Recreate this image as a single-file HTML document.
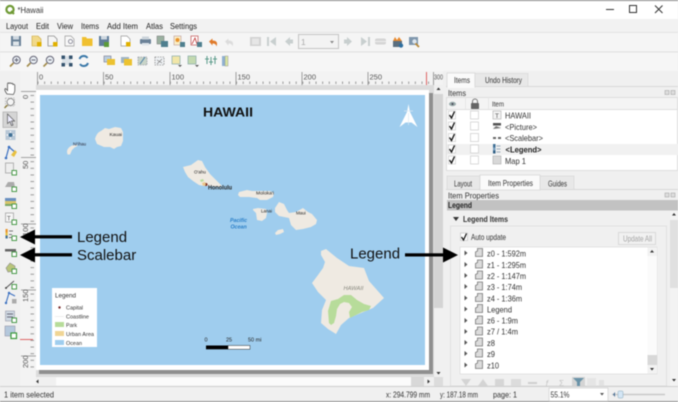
<!DOCTYPE html>
<html><head><meta charset="utf-8"><title>Hawaii</title>
<style>
html,body{margin:0;padding:0;width:678px;height:402px;overflow:hidden;background:#f0f0f0}
svg{display:block;filter:blur(.45px)}
text{font-family:"Liberation Sans",sans-serif;font-size:8.4px;fill:#333}
.m{font-size:8.6px;fill:#222}
.g{fill:#aaa}
.r{font-size:7.5px;fill:#555}
.big{font-size:15px;fill:#111}
.t{font-size:8.2px;fill:#333}
</style></head><body>
<svg width="678" height="402" viewBox="0 0 678 402" xmlns="http://www.w3.org/2000/svg">
<defs>
<pattern id="tk" width="6.62" height="14" patternUnits="userSpaceOnUse" x="37.5" y="71"><rect x="0" y="10.5" width="1" height="2.5" fill="#999"/></pattern>
<pattern id="tl" width="14" height="6.62" patternUnits="userSpaceOnUse" x="20" y="95"><rect x="10.5" y="0" width="4" height="1" fill="#999"/></pattern>
</defs>
<!-- title bar -->
<rect width="678" height="402" fill="#f0f0f0"/>
<rect width="678" height="19" fill="#fff"/>
<rect width="678" height="1" fill="#8a8a8a"/>
<circle cx="10" cy="9.5" r="3.6" fill="none" stroke="#6f9a35" stroke-width="2.2"/><path d="M11 11l3 3" stroke="#6f9a35" stroke-width="2"/>
<text x="17.500" y="13" textLength="26" lengthAdjust="spacingAndGlyphs" style="font-size:8.6px">*Hawaii</text>
<path d="M606 9.500h8" stroke="#333"/><rect x="629.500" y="5.500" width="7" height="7" fill="none" stroke="#333"/><path d="M655 5.500l7.500 7.500M662.500 5.500l-7.500 7.500" stroke="#333"/>
<!-- menu -->
<rect y="19" width="678" height="13" fill="#f2f2f2"/>
<text class="m" x="6" y="29" textLength="22" lengthAdjust="spacingAndGlyphs">Layout</text><text class="m" x="36" y="29" textLength="13" lengthAdjust="spacingAndGlyphs">Edit</text><text class="m" x="57" y="29" textLength="16" lengthAdjust="spacingAndGlyphs">View</text><text class="m" x="81" y="29" textLength="18" lengthAdjust="spacingAndGlyphs">Items</text><text class="m" x="107" y="29" textLength="31" lengthAdjust="spacingAndGlyphs">Add Item</text><text class="m" x="146" y="29" textLength="17" lengthAdjust="spacingAndGlyphs">Atlas</text><text class="m" x="170" y="29" textLength="27" lengthAdjust="spacingAndGlyphs">Settings</text>
<!-- toolbars -->
<rect y="32" width="678" height="20" fill="#f5f5f5"/><rect y="32" width="678" height=".7" fill="#dcdcdc"/>
<rect y="52" width="678" height="19" fill="#f6f6f6"/><rect y="51.500" width="678" height=".8" fill="#d8d8d8"/>
<!-- toolbar1 icons -->
<g>
<rect x="11" y="36" width="10" height="10" fill="#6b8298"/><rect x="13" y="36" width="6" height="3.500" fill="#cfd8e0"/><rect x="13" y="41.500" width="6" height="4" fill="#dfe5ea"/>
<path d="M32 36h6l3 3v7h-9z" fill="#f1d98a" stroke="#c9a63a" stroke-width=".6"/><rect x="37" y="42" width="4.500" height="4.500" fill="#e0b000"/>
<path d="M48 36h6l3 3v7h-9z" fill="#f5f5f5" stroke="#8d8d8d" stroke-width=".8"/><rect x="53" y="42" width="4.500" height="4.500" fill="#e0b000"/>
<path d="M65 36h6l3 3v7h-9z" fill="#f8f8f8" stroke="#9a9a9a" stroke-width=".7"/><circle cx="70.500" cy="41.500" r="2" fill="none" stroke="#778" stroke-width=".8"/>
<path d="M82 37h4l1 1.500h5.500V46H82z" fill="#f0c030"/>
<rect x="99" y="36" width="10" height="10" fill="#607d9a"/><rect x="101" y="36" width="6" height="3.500" fill="#cfd8e0"/><rect x="104" y="42" width="5" height="5" fill="#5b9a3a"/>
<path d="M121 36h6l3 3v7h-9z" fill="#fff" stroke="#999" stroke-width=".7"/><rect x="126" y="42" width="4.500" height="4.500" fill="#e0b000"/>
<rect x="140" y="39" width="11" height="5" rx="1" fill="#6b8298"/><rect x="142" y="36.500" width="7" height="3" fill="#cbd3da"/><rect x="142" y="43" width="7" height="2.500" fill="#dfe5ea"/>
<rect x="157" y="36" width="7" height="8" fill="#9ab0a0" stroke="#777" stroke-width=".5"/><rect x="161" y="41" width="7" height="6" fill="#4f7f8f"/>
<rect x="174" y="36" width="7" height="9" fill="#fbeec5" stroke="#b99" stroke-width=".6"/><circle cx="177.500" cy="40" r="2" fill="#e8932c"/><rect x="180" y="42" width="5" height="5" fill="#4f7f8f"/>
<rect x="191" y="36" width="7" height="9" fill="#fff" stroke="#c05050" stroke-width=".7"/><path d="M192 44l3-6 2 6" stroke="#c03030" fill="none" stroke-width=".8"/><rect x="197" y="42" width="5" height="5" fill="#4f7f8f"/>
<path d="M209 41.500l3.500-3v2c4 0 5.500 2 4 6-.5-2.500-2-3-4-3v2z" fill="#e07a2a"/>
<path d="M225 41.500l3.500-3v2c4 0 5.500 2 4 6-.5-2.500-2-3-4-3v2z" fill="#dcdcdc"/>
<rect x="250" y="37" width="11" height="9" fill="#d2d2d2"/><rect x="252" y="38.500" width="7" height="6" fill="#e6e6e6"/>
<path d="M267 37v9h2v-9zM276 37l-6 4.500 6 4.500z" fill="#c8cfcf"/>
<path d="M285 41.500l5-4.500v2.500h3v4h-3v2.500z" fill="#c8cfcf"/>
<rect x="298.500" y="34.500" width="40" height="14" fill="#f3f3f3" stroke="#c4c4c4"/><text x="301" y="45" class="g">1</text><path d="M330 41h4l-2 2.500z" fill="#888"/>
<path d="M352 41.500l-5-4.500v2.500h-3v4h3v2.500z" fill="#c8cfcf"/>
<path d="M370 37v9h-2v-9zM361 37l6 4.500-6 4.500z" fill="#c8cfcf"/>
<rect x="375" y="38.500" width="11" height="6" rx="2" fill="#d4d4d4"/><path d="M375 41.500h11" stroke="#eee"/>
<rect x="393" y="41" width="9" height="6" fill="#5b6f7f"/><path d="M393 41l2-4 2 3 2-3 3 4z" fill="#e88a30"/><circle cx="401" cy="45.500" r="2.200" fill="#2f6f9f"/>
<rect x="409" y="37" width="9" height="8" fill="#7f97ad"/><path d="M415 43l4 4" stroke="#b88a3a" stroke-width="1.800"/><circle cx="414.500" cy="41.500" r="2.200" fill="#dde6ee"/>
</g>
<!-- toolbar2 icons -->
<g fill="none">
<g stroke="#667" stroke-width="1"><circle cx="16.500" cy="60" r="3.700" fill="#e8eef3"/><path d="M13.500 63l-3.500 3.500" stroke="#a08a4a" stroke-width="1.600"/><path d="M14.500 60h4M16.500 58v4"/>
<circle cx="33.500" cy="60" r="3.700" fill="#e8eef3"/><path d="M30.500 63l-3.500 3.500" stroke="#a08a4a" stroke-width="1.600"/><path d="M31.500 60h4"/>
<circle cx="50" cy="60" r="3.700" fill="#e8eef3"/><path d="M47 63l-3.500 3.500" stroke="#a08a4a" stroke-width="1.600"/><path d="M48.500 60h3"/></g>
<rect x="62" y="56" width="9" height="9" fill="#dbe2e8"/><g fill="#35536e"><rect x="61.500" y="55.500" width="3.500" height="3.500"/><rect x="69" y="55.500" width="3.500" height="3.500"/><rect x="61.500" y="63" width="3.500" height="3.500"/><rect x="69" y="63" width="3.500" height="3.500"/></g>
<path d="M79.500 59a4.500 4.500 0 0 1 8-1M88 63a4.500 4.500 0 0 1-8 1" stroke="#3a78a8" stroke-width="2"/>
</g>
<rect x="104" y="56" width="7" height="6" fill="#b8cde0" stroke="#778" stroke-width=".6"/><rect x="107" y="59" width="8" height="6" fill="#ecc230"/>
<rect x="121" y="57" width="8" height="6" fill="#9fb4c4"/><rect x="124" y="59" width="8" height="6.500" fill="#ecc230"/>
<rect x="138" y="57" width="9" height="8" fill="#c8d4c8" stroke="#889" stroke-width=".6" stroke-dasharray="1.500 1"/><path d="M140 64l5-7" stroke="#4a7fa8"/>
<rect x="155" y="57" width="9" height="8" fill="#eef1f4" stroke="#666" stroke-width=".6" stroke-dasharray="1.500 1"/><path d="M157 60l5 3M162 59l-5 5" stroke="#777" stroke-width=".6"/>
<rect x="172" y="56" width="8" height="8" fill="#f1e6a8" stroke="#8aa" stroke-width=".7"/><path d="M178 65h4l-2 2z" fill="#555"/>
<rect x="188" y="56" width="8" height="8" fill="#c3d9b0" stroke="#8aa" stroke-width=".7"/><path d="M195 65h4l-2 2z" fill="#555"/>
<path d="M207 56v8M211 57v8M215 56v8" stroke="#5a9a8a"/><path d="M205 59h4M209 62h4M213 59h4" stroke="#5a9a8a"/>
<rect x="222" y="56" width="3" height="10" fill="#8fb0d0"/><rect x="225" y="56" width="3" height="10" fill="#d8e4a0" stroke="#889" stroke-width=".4"/>
<!-- workspace -->
<rect x="20" y="71" width="423" height="316" fill="#dcdcdc"/>
<!-- top ruler -->
<rect x="20" y="71" width="423" height="14" fill="#f3f3f3"/>
<rect x="36" y="71" width="395" height="14" fill="url(#tk)"/>
<g stroke="#888" stroke-width=".8"><path d="M37.500 72v13M103.500 72v13M170 72v13M236 72v13M302 72v13M368 72v13M433.500 72v13"/></g>
<path d="M426.500 72v13" stroke="#d55" stroke-width=".9"/>
<g class="r"><text class="r" x="39" y="79.500">0</text><text class="r" x="105" y="79.500">50</text><text class="r" x="171.500" y="79.500">100</text><text class="r" x="237.500" y="79.500">150</text><text class="r" x="303.500" y="79.500">200</text><text class="r" x="369.500" y="79.500">250</text><text class="r" x="434" y="79.500" textLength="9" lengthAdjust="spacingAndGlyphs">300</text></g>
<rect x="443" y="71" width="3" height="316" fill="#f0f0f0"/>
<!-- left ruler -->
<rect x="20" y="85" width="16" height="302" fill="#f3f3f3"/>
<rect x="20" y="91" width="16" height="280" fill="url(#tl)"/>
<g stroke="#888" stroke-width=".8"><path d="M21 91.500h15M21 157.500h15M21 224h15M21 290h15M21 356h15"/></g>
<path d="M20 339.500h13" stroke="#d55" stroke-width=".9"/>
<text class="r" transform="translate(28,99) rotate(-90)">0</text>
<text class="r" transform="translate(28,169) rotate(-90)">50</text>
<text class="r" transform="translate(28,236) rotate(-90)">100</text>
<text class="r" transform="translate(28,302) rotate(-90)">150</text>
<text class="r" transform="translate(28,368) rotate(-90)">200</text>
<!-- page -->
<rect x="39" y="93" width="394" height="281" fill="#8f8f8f"/>
<rect x="36" y="90" width="393" height="280" fill="#fff"/>
<rect x="40" y="95" width="385" height="270" fill="#9fcdee"/>
<!-- islands -->
<g fill="#efeae2">
<path d="M95 139c1-4 3-7 6-8l4-3 4 1 6-2 6 1 2 4 0 9-2 5-4 1-3 2-4-2-6 0-7-3z"/>
<path d="M67 152c0-3 2-5 5-6.500l5-1 .5 1.500-3 1.500-2.500 2.500-2 4.500-2.500 0z"/>
<path d="M183 167l8-2 7-5 4 1 3 6 5 7 7 7 5 5-3 1-8-1-7 0-5-1-6-4-5-4-3-5z"/>
<path d="M239 192l8-2 5 1 10 0 8 0 4 2-1 4-6 3-7 0-3-2-8-1-9 0-2-2z"/>
<path d="M253 209l5-1 8 1 1 4-1 5-4 3-5-1-1-7-3-3z"/>
<path d="M275 208L279 202L284 204L287 210L289 213L296 212L303 208L308 212L312 214L317 220L316 224L311 227L303 229L296 230L291 225L289 218L284 217L279 216L275 212z"/>
<path d="M275 233l3-3 5-1 1 3-4 2-4 1z"/>
<path d="M321 251L326 249L337 258L349 266L364 268L369 281L384 298L373 308L349 318L341 325L336 334L328 329L321 323L322 310L326 300L318 292L312 283L318 275L323 268L325 262L321 255z"/>
</g>
<path d="M329 323L328 311L331 301L338 299L344 295L351 295L357 300L364 304L371 306L369 310L362 312L356 315L350 318L349 312L352 307L349 303L344 302L340 304L337 309L336 316L334 323L331 325z" fill="#b7dc9a"/>
<circle cx="206" cy="184.500" r="1.500" fill="#7a2a1a"/><path d="M202 183l3-1 1 3-3 1z" fill="#ecc88a"/>
<path d="M200 180l3-1 1 2-3 1z" fill="#b7dc9a"/>
<!-- map labels -->
<text x="203" y="116.500" textLength="50" lengthAdjust="spacingAndGlyphs" style="font-size:12.500px;font-weight:bold;fill:#111">HAWAII</text>
<text x="109.500" y="136" textLength="12.500" lengthAdjust="spacingAndGlyphs" style="font-size:4.500px;fill:#222">Kauai</text>
<text x="73" y="145.500" textLength="13" lengthAdjust="spacingAndGlyphs" style="font-size:4.500px;fill:#223">Ni'ihau</text>
<text x="194" y="173.500" style="font-size:4.500px;fill:#222">O'ahu</text>
<text x="208" y="189.500" textLength="24" lengthAdjust="spacingAndGlyphs" style="font-size:6px;font-weight:bold;fill:#222">Honolulu</text>
<text x="256" y="194.500" textLength="18" lengthAdjust="spacingAndGlyphs" style="font-size:4.500px;fill:#222">Moloka'i</text>
<text x="261" y="212.500" style="font-size:4.500px;fill:#222">Lanai</text>
<text x="296" y="214.500" style="font-size:4.500px;fill:#222">Maui</text>
<text x="230" y="222" style="font-size:5.300px;font-style:italic;font-weight:bold;fill:#2a7fc8">Pacific</text>
<text x="230.500" y="228.500" style="font-size:5.300px;font-style:italic;font-weight:bold;fill:#2a7fc8">Ocean</text>
<text x="343.500" y="290" textLength="20" lengthAdjust="spacingAndGlyphs" style="font-size:5px;font-style:italic;fill:#8a8a80">HAWAII</text>
<!-- north arrow -->
<path d="M408.500 104l1.500 8 7.500 15-6-4.500-3 0-3 0-6 4.500 7.500-15z" fill="#fff"/>
<path d="M408.500 113v12M404 111l9 0" stroke="#dbe9f4" stroke-width=".7"/>
<!-- legend -->
<rect x="52" y="288" width="45" height="59" fill="#fff"/>
<text x="55" y="297.500" textLength="21" lengthAdjust="spacingAndGlyphs" style="font-size:6.500px;fill:#333">Legend</text>
<circle cx="59.500" cy="307.500" r="1.200" fill="#7a2a2a"/>
<text x="66" y="309.500" textLength="17" lengthAdjust="spacingAndGlyphs" style="font-size:5.500px;fill:#333">Capital</text>
<path d="M55 316.500h9" stroke="#eee"/>
<text x="66" y="318.500" textLength="23" lengthAdjust="spacingAndGlyphs" style="font-size:5.500px;fill:#333">Coastline</text>
<rect x="55" y="322" width="9" height="5" fill="#b7dc9a"/><text x="66" y="327" textLength="11" lengthAdjust="spacingAndGlyphs" style="font-size:5.500px;fill:#333">Park</text>
<rect x="55" y="331" width="9" height="5" fill="#f0d595"/><text x="66" y="336" textLength="28" lengthAdjust="spacingAndGlyphs" style="font-size:5.500px;fill:#333">Urban Area</text>
<rect x="55" y="340" width="9" height="5" fill="#9fcdee"/><text x="66" y="345" textLength="16" lengthAdjust="spacingAndGlyphs" style="font-size:5.500px;fill:#333">Ocean</text>
<!-- scale -->
<text x="204.500" y="341.500" style="font-size:5.500px;fill:#222">0</text><text x="226" y="341.500" style="font-size:5.500px;fill:#222">25</text><text x="248" y="341.500" style="font-size:5.500px;fill:#222">50 mi</text>
<rect x="206" y="345.500" width="22" height="3.800" fill="#000"/><rect x="228" y="345.500" width="22" height="3.800" fill="#fff" stroke="#000" stroke-width=".4"/>
<!-- canvas scrollbars -->
<rect x="434" y="85" width="9" height="292" fill="#f0f0f0"/>
<rect x="434" y="94" width="9" height="214" fill="#d4d4d4"/>
<path d="M436.500 90h4l-2-2.500z" fill="#333"/><path d="M436.500 372h4l-2 2.500z" fill="#333"/>
<rect x="36" y="377" width="398" height="10" fill="#f0f0f0"/>
<rect x="56" y="377.500" width="355" height="8" fill="#fbfbfb"/><rect x="411" y="377" width="13" height="9" fill="#d8d8d8"/>
<path d="M36 381.500l2.500-2v4z" fill="#333"/><path d="M430 381.500l-2.500-2v4z" fill="#333"/>
<!-- left toolbar -->
<rect width="20" height="316" y="71" fill="#f0f0f0"/>
<path d="M7 94c-2-3-3-5-1.500-5.500l2 2V84c0-1.500 1.500-1.500 1.500 0 0-1.500 2-1.500 2 0 0-1 2-1 2 0.500 1-.5 1.800 0 1.800 1l0 5c0 2-1 3-1.500 4z" fill="#fff" stroke="#555" stroke-width=".8"/>
<rect x="5.500" y="98" width="9" height="8" fill="none" stroke="#999" stroke-width=".6" stroke-dasharray="1.500 1"/><circle cx="10.500" cy="102" r="3.500" fill="#f4f4f4" stroke="#777" stroke-width=".8"/><path d="M7.500 105l-3 3" stroke="#8a7a3a" stroke-width="1.300"/>
<rect x="3" y="112" width="14" height="15.500" fill="#d5d5d5" stroke="#aaa" stroke-width=".7"/><path d="M7.500 114l7 7-3 0 1.500 4-1.500.5-1.500-4-2.500 2z" fill="#eef" stroke="#555" stroke-width=".7"/>
<rect x="5.500" y="130" width="10" height="10" fill="#b8c7d6"/><path d="M10.500 131v8M6.500 135h8" stroke="#fff"/><circle cx="10.500" cy="135" r="2" fill="#3f6f95"/>
<path d="M6 158l3-11 7 6" fill="none" stroke="#3a6fc0" stroke-width="1.200"/><path d="M11 155l4-5 2 2-3 5z" fill="#e8c040"/><circle cx="6" cy="158" r="1.300" fill="#3a6fc0"/><circle cx="9" cy="147" r="1.300" fill="#3a6fc0"/>
<g><rect x="5.500" y="163" width="8" height="10" fill="#eee" stroke="#999" stroke-width=".7"/><rect x="12" y="170.500" width="4.500" height="4.500" fill="#fff" stroke="#4a9a4a" stroke-width="1"/>
<path d="M5 187l3-5 6 0 1 5z" fill="#aaa"/><rect x="12" y="187" width="4.500" height="4.500" fill="#fff" stroke="#4a9a4a" stroke-width="1"/>
<rect x="5" y="198" width="11" height="3" fill="#6a90c0"/><rect x="5" y="201" width="11" height="3" fill="#d8c46a"/><rect x="5" y="204" width="11" height="2" fill="#7aa868"/><rect x="12" y="204" width="4.500" height="4.500" fill="#fff" stroke="#4a9a4a" stroke-width="1"/>
<rect x="5.500" y="213" width="8" height="9" fill="#f6f6f6" stroke="#999" stroke-width=".7"/><text x="7" y="220.500" style="font-size:6px;fill:#555">T</text><rect x="12" y="220" width="4.500" height="4.500" fill="#fff" stroke="#4a9a4a" stroke-width="1"/>
<rect x="5.500" y="229" width="2.200" height="3.500" fill="#e8932c"/><rect x="5.500" y="232.500" width="2.200" height="3" fill="#e8c040"/><rect x="5.500" y="235.500" width="2.200" height="3" fill="#3f6f95"/><path d="M9 231h4M9 234.500h3M9 237.500h3" stroke="#777"/><rect x="12" y="236" width="4.500" height="4.500" fill="#fff" stroke="#4a9a4a" stroke-width="1"/>
<rect x="5" y="249" width="11" height="2.500" fill="#666"/><rect x="12" y="252" width="4.500" height="4.500" fill="#fff" stroke="#4a9a4a" stroke-width="1"/>
<path d="M6 268l4-5 5 3 0 5-7 1z" fill="#b8c47a" stroke="#888" stroke-width=".6"/><rect x="12" y="269" width="4.500" height="4.500" fill="#fff" stroke="#4a9a4a" stroke-width="1"/>
<path d="M6 288l8-7" stroke="#555"/><circle cx="6" cy="288" r="1" fill="#444"/><rect x="12" y="284.500" width="4.500" height="4.500" fill="#fff" stroke="#4a9a4a" stroke-width="1"/>
<path d="M6 303l3-10 6 3" fill="none" stroke="#3a6fc0" stroke-width="1.100"/><rect x="12" y="299" width="4.500" height="4.500" fill="#aaa"/><circle cx="9" cy="293" r="1.200" fill="#3a6fc0"/><circle cx="6" cy="303" r="1.200" fill="#3a6fc0"/>
<rect x="5.500" y="311" width="9" height="10" fill="#cfd9e2" stroke="#889" stroke-width=".5"/><path d="M7 314h6M7 317h6" stroke="#667"/><rect x="12" y="318" width="4.500" height="4.500" fill="#fff" stroke="#4a9a4a" stroke-width="1"/>
<rect x="5" y="326" width="10" height="10" fill="#b4c8dc" stroke="#889" stroke-width=".5"/><rect x="11" y="333" width="5.500" height="5.500" fill="#fff" stroke="#3a9a3a" stroke-width="1.200"/></g>
<!-- annotations -->
<rect x="33" y="235.200" width="39" height="3.200" fill="#000"/><path d="M20 237l15-7.500v15z" fill="#000"/>
<rect x="33" y="253.200" width="39" height="3.200" fill="#000"/><path d="M20 255l15-7.500v15z" fill="#000"/>
<text class="big" x="77" y="242">Legend</text>
<text class="big" x="77" y="260">Scalebar</text>
<!-- right panel -->
<rect x="446" y="71" width="232" height="316" fill="#f0f0f0"/>
<path d="M446 86.500h232" stroke="#d8d8d8"/>
<rect x="447" y="73" width="28" height="14" fill="#fafafa" stroke="#d4d4d4" stroke-width=".7"/>
<rect x="475" y="73.500" width="53" height="13" fill="#e8e8e8" stroke="#d8d8d8" stroke-width=".7"/>
<rect x="447.500" y="85" width="27" height="3" fill="#fafafa"/>
<text class="t" x="454" y="83" textLength="16" lengthAdjust="spacingAndGlyphs">Items</text><text class="t" x="485" y="83" textLength="37" lengthAdjust="spacingAndGlyphs">Undo History</text>
<text x="448" y="96" textLength="18" lengthAdjust="spacingAndGlyphs" style="font-size:8.600px;fill:#333">Items</text>
<g fill="#ddd" stroke="#999" stroke-width=".5"><rect x="665" y="90.500" width="4" height="4"/><rect x="671" y="90.500" width="4" height="4"/></g>
<rect x="447" y="97" width="231" height="13" fill="#f4f4f4"/>
<rect x="447" y="109.500" width="231" height="61" fill="#fff"/>
<rect x="446.500" y="97.500" width="231" height="73" fill="none" stroke="#d9d9d9" stroke-width=".8"/>
<path d="M447 109.500h231" stroke="#dedede"/>
<path d="M465.500 97v13M488.500 97v13" stroke="#e2e2e2" stroke-width=".7"/>
<ellipse cx="452.500" cy="104" rx="3.500" ry="2.200" fill="#9aa"/><circle cx="452.500" cy="104" r="1" fill="#445"/>
<rect x="471" y="103" width="8" height="6" rx=".8" fill="#666"/><path d="M472.500 103v-1.500a2.500 2.500 0 0 1 5 0V103" fill="none" stroke="#777"/>
<text x="492" y="106.500" textLength="12" lengthAdjust="spacingAndGlyphs" style="font-size:7.500px;fill:#333">Item</text>
<rect x="447" y="144" width="231" height="11" fill="#f1f1f1"/>
<g fill="#fff" stroke="#ccc" stroke-width=".7">
<rect x="448.500" y="111" width="7" height="8"/><rect x="448.500" y="122" width="7" height="8"/><rect x="448.500" y="133.500" width="7" height="8"/><rect x="448.500" y="145" width="7" height="8"/><rect x="448.500" y="156" width="7" height="8"/>
<rect x="470.500" y="111" width="8" height="8"/><rect x="470.500" y="122" width="8" height="8"/><rect x="470.500" y="133.500" width="8" height="8"/><rect x="470.500" y="145" width="8" height="8"/><rect x="470.500" y="156" width="8" height="8"/>
</g>
<g fill="none" stroke="#111" stroke-width="1.300"><path d="M449.500 115l2 3 3-6.500M449.500 126l2 3 3-6.500M449.500 137.500l2 3 3-6.500M449.500 149l2 3 3-6.500M449.500 160l2 3 3-6.500"/></g>
<rect x="493" y="111" width="8" height="8" fill="#f4f4f4" stroke="#aaa" stroke-width=".6"/><text x="495" y="118" style="font-size:6.500px;fill:#555">T</text>
<rect x="493" y="123" width="8" height="6" fill="#f4f4f4"/><rect x="493" y="123" width="8" height="2.500" fill="#555"/><path d="M493 129l3-3 5 2z" fill="#777"/>
<path d="M493 138h3M498 138h3" stroke="#666" stroke-width="2"/>
<rect x="493" y="144" width="2.500" height="3.500" fill="#3f6f95"/><rect x="493" y="147.500" width="2.500" height="3" fill="#7aa0c0"/><rect x="493" y="150.500" width="2.500" height="3" fill="#2f5f85"/><path d="M496.500 146h4M496.500 149h4M496.500 152h4" stroke="#9ab"/>
<rect x="493" y="156" width="8" height="8" fill="#d8d8d8" stroke="#aaa" stroke-width=".6"/>
<text x="505" y="118.500" textLength="26" lengthAdjust="spacingAndGlyphs" style="font-size:8.400px;fill:#333">HAWAII</text>
<text x="505" y="130" textLength="32" lengthAdjust="spacingAndGlyphs" style="font-size:8.400px;fill:#333">&lt;Picture&gt;</text>
<text x="505" y="141" textLength="38" lengthAdjust="spacingAndGlyphs" style="font-size:8.400px;fill:#333">&lt;Scalebar&gt;</text>
<text x="505.500" y="152.500" textLength="36" lengthAdjust="spacingAndGlyphs" style="font-size:8.400px;font-weight:bold;fill:#222">&lt;Legend&gt;</text>
<text x="505" y="164" textLength="21" lengthAdjust="spacingAndGlyphs" style="font-size:8.400px;fill:#333">Map 1</text>
<!-- lower tabs -->
<path d="M446 189.500h232" stroke="#d8d8d8"/>
<rect x="447" y="176" width="33" height="13.500" fill="#e8e8e8" stroke="#d8d8d8" stroke-width=".7"/>
<rect x="540" y="176" width="34" height="13.500" fill="#e8e8e8" stroke="#d8d8d8" stroke-width=".7"/>
<rect x="480" y="175" width="60" height="15" fill="#fafafa" stroke="#d4d4d4" stroke-width=".7"/>
<text class="t" x="454" y="186.500" textLength="18" lengthAdjust="spacingAndGlyphs">Layout</text><text class="t" x="488" y="186" textLength="45" lengthAdjust="spacingAndGlyphs">Item Properties</text><text class="t" x="548" y="186.500" textLength="19" lengthAdjust="spacingAndGlyphs">Guides</text>
<text x="448" y="198.500" textLength="51" lengthAdjust="spacingAndGlyphs" style="font-size:8.600px;fill:#333">Item Properties</text>
<g fill="#ddd" stroke="#999" stroke-width=".5"><rect x="665" y="193" width="4" height="4"/><rect x="671" y="193" width="4" height="4"/></g>
<rect x="447" y="200" width="231" height="10.500" fill="#c2c2c2"/>
<text x="448" y="208" textLength="24" lengthAdjust="spacingAndGlyphs" style="font-size:7.800px;font-weight:bold;fill:#222">Legend</text>
<!-- props -->
<rect x="447" y="211" width="223" height="176" fill="#f0f0f0"/>
<path d="M453 217h6l-3 4z" fill="#333"/>
<text x="463" y="222" textLength="45" lengthAdjust="spacingAndGlyphs" style="font-size:8px;font-weight:bold;fill:#333">Legend Items</text>
<rect x="450.500" y="226" width="216" height="160" fill="none" stroke="#dcdcdc" stroke-width=".8"/>
<rect x="670" y="211" width="8" height="176" fill="#f3f3f3"/>
<rect x="670" y="220" width="8" height="68" fill="#e0e0e0"/>
<path d="M672 215.500h4l-2-2.500zM672 379h4l-2 2.500z" fill="#333"/>
<rect x="460.500" y="233" width="7" height="7.500" fill="#fff" stroke="#bbb" stroke-width=".6"/>
<path d="M461.500 237l2 3 3-6.500" fill="none" stroke="#111" stroke-width="1.200"/>
<text class="t" x="471" y="240" textLength="35" lengthAdjust="spacingAndGlyphs">Auto update</text>
<rect x="618.500" y="232.500" width="37" height="12" fill="#f1f1f1" stroke="#d4d4d4" stroke-width=".8"/>
<text x="623" y="241.500" textLength="29" lengthAdjust="spacingAndGlyphs" style="font-size:7.800px;fill:#a5a5a5">Update All</text>
<rect x="460" y="247" width="197" height="127" fill="#fff" stroke="#dadada" stroke-width=".7"/>
<rect x="647.500" y="247.500" width="9.500" height="126" fill="#f2f2f2"/>
<rect x="647.500" y="256" width="9.500" height="100" fill="#fbfbfb"/><rect x="647.500" y="355" width="9.500" height="10" fill="#d8d8d8"/>
<path d="M650 252.500h4l-2-2.500zM650 368h4l-2 2.500z" fill="#333"/>
<g fill="#555">
<path d="M464.500 250.500l3 2.500-3 2.500zM464.500 262l3 2.500-3 2.500zM464.500 273l3 2.500-3 2.500zM464.500 284l3 2.500-3 2.500zM464.500 295.500l3 2.500-3 2.500zM464.500 306.500l3 2.500-3 2.500zM464.500 318l3 2.500-3 2.500zM464.500 329l3 2.500-3 2.500zM464.500 340l3 2.500-3 2.500zM464.500 351l3 2.500-3 2.500zM464.500 362.500l3 2.500-3 2.500z"/>
</g>
<g fill="#dcdcdc" stroke="#777" stroke-width=".8">
<path d="M475.500 252l2-1v-2.500h5v8h-7zM475.500 263.500l2-1v-2.500h5v8h-7zM475.500 274.500l2-1v-2.500h5v8h-7zM475.500 285.500l2-1v-2.500h5v8h-7zM475.500 297l2-1v-2.500h5v8h-7zM475.500 308l2-1v-2.500h5v8h-7zM475.500 319.500l2-1v-2.500h5v8h-7zM475.500 330.500l2-1v-2.500h5v8h-7zM475.500 341.500l2-1v-2.500h5v8h-7zM475.500 352.500l2-1v-2.500h5v8h-7zM475.500 364l2-1v-2.500h5v8h-7z"/>
</g>
<text class="t" x="487" y="256.500" textLength="39" lengthAdjust="spacingAndGlyphs">z0 - 1:592m</text>
<text class="t" x="487" y="268" textLength="39" lengthAdjust="spacingAndGlyphs">z1 - 1:295m</text>
<text class="t" x="487" y="279" textLength="39" lengthAdjust="spacingAndGlyphs">z2 - 1:147m</text>
<text class="t" x="487" y="290" textLength="35" lengthAdjust="spacingAndGlyphs">z3 - 1:74m</text>
<text class="t" x="487" y="301.500" textLength="35" lengthAdjust="spacingAndGlyphs">z4 - 1:36m</text>
<text class="t" x="487" y="312.500" textLength="25" lengthAdjust="spacingAndGlyphs">Legend</text>
<text class="t" x="487" y="323.500" textLength="31" lengthAdjust="spacingAndGlyphs">z6 - 1:9m</text>
<text class="t" x="487" y="334.500" textLength="31" lengthAdjust="spacingAndGlyphs">z7 / 1:4m</text>
<text class="t" x="487" y="346" textLength="8" lengthAdjust="spacingAndGlyphs">z8</text>
<text class="t" x="487" y="357" textLength="8" lengthAdjust="spacingAndGlyphs">z9</text>
<text class="t" x="487" y="368.500" textLength="12" lengthAdjust="spacingAndGlyphs">z10</text>
<!-- legend buttons -->
<path d="M461 379h10l-5 7zM478 386h10l-5-7z" fill="#d4d4d4"/>
<rect x="495" y="379" width="9" height="8" fill="#d6d6d6"/><rect x="511" y="379" width="10" height="8" fill="#dcdcdc"/><rect x="528" y="382" width="9" height="2" fill="#cfcfcf"/>
<text x="545" y="386" style="font-size:8px;fill:#c4c4c4">ƒ</text><text x="559" y="386" style="font-size:8px;fill:#c4c4c4">Σ</text>
<rect x="572" y="377" width="13" height="10" fill="#d4d4d4"/><path d="M573 378h11l-4 4v4l-3 0v-4z" fill="#6a93a8"/>
<rect x="587" y="378" width="9" height="9" fill="#e5e5e5"/><rect x="599" y="380" width="5" height="7" fill="#e2e2e2"/>
<!-- status bar -->
<rect y="387" width="678" height="15" fill="#f0f0f0"/>
<path d="M0 386.500h678" stroke="#cfcfcf"/><rect y="401" width="678" height="1" fill="#8f8f8f"/>
<text x="4" y="397.500" textLength="50" lengthAdjust="spacingAndGlyphs" style="font-size:8.600px;fill:#333">1 item selected</text>
<text class="t" x="386" y="397.500" textLength="44" lengthAdjust="spacingAndGlyphs">x: 294.799 mm</text>
<text class="t" x="440" y="397.500" textLength="38" lengthAdjust="spacingAndGlyphs">y: 187.18 mm</text>
<text class="t" x="493" y="397.500" textLength="24" lengthAdjust="spacingAndGlyphs">page: 1</text>
<rect x="549" y="388" width="59" height="13" fill="#fff" stroke="#cfcfcf" stroke-width=".7"/>
<text class="t" x="550.500" y="397.500" textLength="19" lengthAdjust="spacingAndGlyphs">55.1%</text>
<path d="M600 393h4l-2 2.500z" fill="#555"/>
<path d="M612 394.500h53" stroke="#c8c8c8" stroke-width="1.500"/>
<path d="M615 392v5l-2-2.500z" fill="#4a6f95"/>
<rect x="618" y="391" width="5" height="7" rx="1" fill="#d4e6f5" stroke="#8ab" stroke-width=".5"/>
<!-- right arrow & label on top -->
<rect x="405" y="253.300" width="38" height="3.200" fill="#000"/><path d="M458 255l-15-7.500v15z" fill="#000"/>
<text class="big" x="350" y="258.500">Legend</text>
</svg>
</body></html>
